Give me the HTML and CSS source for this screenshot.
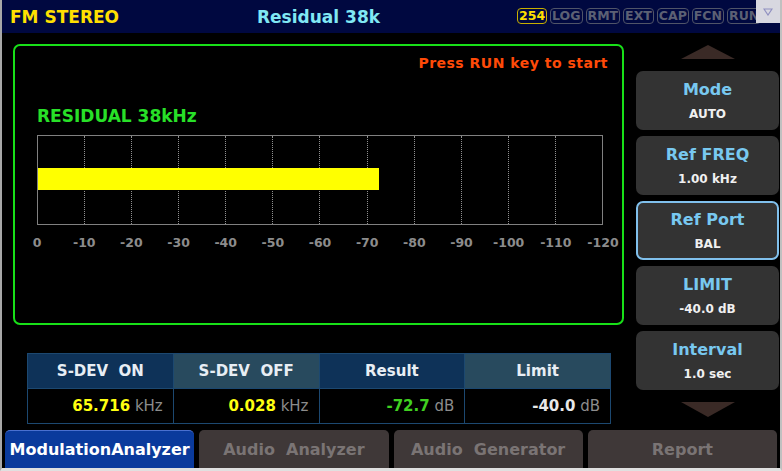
FILE: index.html
```html
<!DOCTYPE html>
<html lang="en">
<head>
  <meta charset="UTF-8">
  <title>FM STEREO - Residual 38k</title>
  <link rel="stylesheet" href="styles.css">
</head>
<body>
  <div class="screen">
    <div class="header">
      <span class="mode">FM STEREO</span>
      <span class="title">Residual 38k</span>
      <div class="badges">
        <span class="badge active">254</span>
        <span class="badge">LOG</span>
        <span class="badge">RMT</span>
        <span class="badge">EXT</span>
        <span class="badge">CAP</span>
        <span class="badge">FCN</span>
        <span class="badge">RUN</span>
      </div>
      <div class="drop"><svg width="10" height="8" viewBox="0 0 10 8"><path d="M1 1 L9 1 L5 7 Z" fill="none" stroke="#9090c0" stroke-width="1.2"/></svg></div>
    </div>

    <div class="main">
      <div class="left">
        <div class="panel">
          <div class="hint">Press RUN key to start</div>
          <div class="caption">RESIDUAL 38kHz</div>
          <div class="chart">
            <div class="grid">
              <span></span><span></span><span></span><span></span><span></span><span></span>
              <span></span><span></span><span></span><span></span><span></span><span></span>
            </div>
            <div class="bar" style="width: 60.4%"></div>
          </div>
          <div class="axis">
            <span>0</span><span>-10</span><span>-20</span><span>-30</span><span>-40</span><span>-50</span><span>-60</span>
            <span>-70</span><span>-80</span><span>-90</span><span>-100</span><span>-110</span><span>-120</span>
          </div>
        </div>

        <table class="results">
          <tr>
            <th class="dark">S-DEV&nbsp; ON</th>
            <th class="slate">S-DEV&nbsp; OFF</th>
            <th class="dark">Result</th>
            <th class="slate">Limit</th>
          </tr>
          <tr>
            <td><b class="yellow">65.716</b> kHz</td>
            <td><b class="yellow">0.028</b> kHz</td>
            <td><b class="green">-72.7</b> dB</td>
            <td><b class="white">-40.0</b> dB</td>
          </tr>
        </table>
      </div>

      <div class="side">
        <div class="arrow up"></div>
        <div class="key"><div class="key-name">Mode</div><div class="key-val">AUTO</div></div>
        <div class="key"><div class="key-name">Ref FREQ</div><div class="key-val">1.00 kHz</div></div>
        <div class="key selected"><div class="key-name">Ref Port</div><div class="key-val">BAL</div></div>
        <div class="key"><div class="key-name">LIMIT</div><div class="key-val">-40.0 dB</div></div>
        <div class="key"><div class="key-name">Interval</div><div class="key-val">1.0 sec</div></div>
        <div class="arrow down"></div>
      </div>
    </div>

    <div class="tabs">
      <div class="tab current">ModulationAnalyzer</div>
      <div class="tab">Audio&nbsp; Analyzer</div>
      <div class="tab">Audio&nbsp; Generator</div>
      <div class="tab">Report</div>
    </div>
  </div>
</body>
</html>
```

FILE: styles.css
```css
* {
  box-sizing: border-box;
}

body {
  margin: 0;
  background-color: #d8d8d8;
  font-family: "DejaVu Sans", "Noto Sans", sans-serif;
}

.screen {
  width: 782px;
  height: 471px;
  background-color: #000;
  border-left: 2px solid #a8a8a8;
  border-right: 2px solid #c0c0c0;
  border-bottom: 3px solid #e0e0e0;
  display: flex;
  flex-direction: column;
  overflow: hidden;
}

/* header */
.header {
  height: 33px;
  background-color: #000840;
  display: flex;
  align-items: center;
  position: relative;
}

.mode {
  color: #ffe000;
  font-weight: bold;
  font-size: 17px;
  margin-left: 8px;
  width: 247px;
}

.title {
  color: #80e8f4;
  font-weight: bold;
  font-size: 17px;
}

.badges {
  position: absolute;
  left: 515px;
  top: 8px;
  display: flex;
  gap: 3px;
}

.badge {
  font-size: 12.5px;
  font-weight: bold;
  color: #5c6074;
  border: 1.5px solid #505468;
  border-radius: 4px;
  padding: 0 1px;
  line-height: 14px;
}

.badge.active {
  color: #ffe000;
  border-color: #c8b000;
}

.drop {
  position: absolute;
  right: 0;
  top: 0;
  width: 24px;
  height: 23px;
  background-color: #d8d8e0;
  display: flex;
  align-items: center;
  justify-content: center;
}

/* main */
.main {
  display: flex;
  height: 397px;
}

.left {
  width: 630px;
  padding-left: 11px;
}

.panel {
  margin-top: 11px;
  width: 611px;
  height: 281px;
  border: 2px solid #18e018;
  border-radius: 7px;
  padding: 0 0 0 22px;
}

.hint {
  color: #ff4a08;
  font-size: 14px;
  font-weight: bold;
  letter-spacing: 0.5px;
  text-align: right;
  padding-right: 14px;
  margin-top: 7px;
  height: 20px;
  line-height: 20px;
}

.caption {
  color: #28e028;
  font-size: 17px;
  font-weight: bold;
  margin-top: 31px;
  height: 24px;
  line-height: 24px;
}

.chart {
  margin-top: 7px;
  width: 566px;
  height: 90px;
  border: 1px solid #808080;
  position: relative;
}

.grid {
  display: flex;
  height: 100%;
}

.grid span {
  flex: 1;
  border-right: 1px dotted #909090;
}

.grid span:last-child {
  border-right: none;
}

.bar {
  position: absolute;
  left: 0;
  top: 32px;
  height: 22px;
  background-color: #ffff00;
}

.axis {
  display: flex;
  margin-left: -23.5px;
  margin-top: 10px;
  width: 613px;
}

.axis span {
  flex: 1;
  text-align: center;
  color: #8c8c8c;
  font-size: 12.5px;
  font-weight: bold;
  line-height: 16px;
}

/* results table */
.results {
  margin-top: 28px;
  margin-left: 14px;
  width: 584px;
  border-collapse: collapse;
  table-layout: fixed;
}

.results th {
  height: 35px;
  color: #e8eef4;
  font-size: 15px;
  font-weight: bold;
  border: 1px solid #1c4870;
}

.results th.dark {
  background-color: #0e3258;
}

.results th.slate {
  background-color: #284a5e;
}

.results td {
  height: 35px;
  text-align: right;
  padding-right: 10px;
  color: #8c8c8c;
  font-size: 15px;
  border: 1px solid #1c4870;
}

.yellow { color: #ffff10; }
.green { color: #40d020; }
.white { color: #e8e8e8; }

/* side keys */
.side {
  width: 148px;
  display: flex;
  flex-direction: column;
  align-items: center;
  padding-left: 3px;
}

.arrow {
  width: 0;
  height: 0;
  border-left: 27px solid transparent;
  border-right: 27px solid transparent;
}

.arrow.up {
  margin-top: 12px;
  border-bottom: 14px solid #3a2a26;
}

.arrow.down {
  margin-top: 12px;
  border-top: 15px solid #3a2a26;
}

.key {
  width: 143px;
  height: 59px;
  margin-top: 6px;
  background-color: #333333;
  border-radius: 7px;
  text-align: center;
  padding-top: 7px;
}

.arrow.up + .key {
  margin-top: 12px;
}

.key.selected {
  border: 2px solid #80c0ec;
  padding-top: 5px;
}

.key-name {
  color: #78c8f0;
  font-size: 16px;
  font-weight: bold;
  line-height: 24px;
}

.key-val {
  color: #f0f0f0;
  font-size: 12px;
  font-weight: bold;
  line-height: 18px;
  margin-top: 3px;
}

/* bottom tabs */
.tabs {
  display: flex;
  gap: 5px;
  padding: 0 3px;
  height: 38px;
}

.tab {
  flex: 1;
  background-color: #3f3838;
  color: #7a7474;
  font-size: 16px;
  font-weight: bold;
  border-radius: 5px 5px 0 0;
  display: flex;
  align-items: center;
  justify-content: center;
}

.tab.current {
  background-color: #0a3a9c;
  color: #ffffff;
  border-top: 1px solid #4a70d0;
}
```
